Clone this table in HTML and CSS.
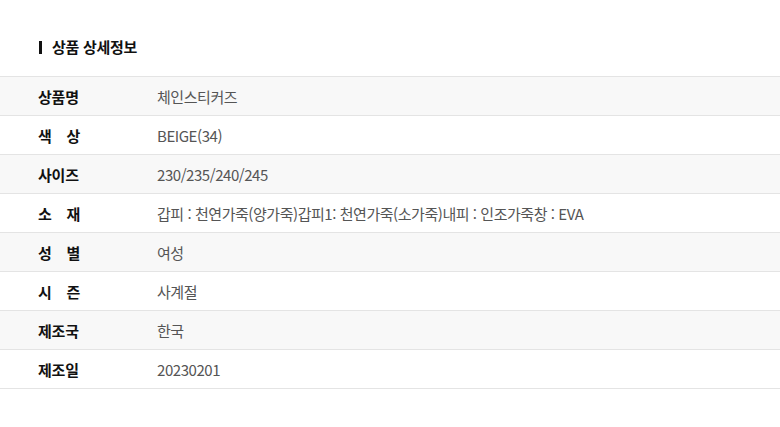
FILE: index.html
```html
<!DOCTYPE html>
<html lang="ko">
<head>
<meta charset="utf-8">
<link rel="stylesheet" href="styles.css">
</head>
<body>
<div class="page">
  <h2 class="title"><span class="bar"></span>상품 상세정보</h2>
  <div class="table">
    <div class="row alt"><div class="label">상품명</div><div class="value">체인스티커즈</div></div>
    <div class="row"><div class="label">색 상</div><div class="value">BEIGE(34)</div></div>
    <div class="row alt"><div class="label">사이즈</div><div class="value">230/235/240/245</div></div>
    <div class="row"><div class="label">소 재</div><div class="value">갑피 : 천연가죽(양가죽)갑피1: 천연가죽(소가죽)내피 : 인조가죽창 : EVA</div></div>
    <div class="row alt"><div class="label">성 별</div><div class="value">여성</div></div>
    <div class="row"><div class="label">시 즌</div><div class="value">사계절</div></div>
    <div class="row alt"><div class="label">제조국</div><div class="value">한국</div></div>
    <div class="row"><div class="label">제조일</div><div class="value">20230201</div></div>
  </div>
</div>
</body>
</html>
```
FILE: styles.css
```css
* { box-sizing: border-box; }
body {
  margin: 0;
  background: #fff;
  font-family: "Noto Sans CJK KR", "Noto Sans", sans-serif;
  color: #111;
}
.page { padding-top: 37px; }
.title {
  margin: 0 0 19px 0;
  padding-left: 39px;
  display: flex;
  align-items: center;
  font-size: 15px;
  font-weight: 700;
  line-height: 20px;
  letter-spacing: -0.3px;
}
.bar {
  width: 3px;
  height: 13px;
  background: #111;
  margin-right: 10px;
}
.table { border-top: 1px solid #e4e4e4; }
.row {
  display: flex;
  align-items: center;
  height: 39px;
  border-bottom: 1px solid #e4e4e4;
  font-size: 15px;
}
.row.alt { background: #f8f8f8; }
.label {
  width: 42px;
  margin-left: 38px;
  font-weight: 700;
  color: #111;
  text-align: justify;
  text-align-last: justify;
  white-space: nowrap;
  letter-spacing: -0.2px;
}
.value {
  margin-left: 77px;
  color: #555;
  letter-spacing: -0.45px;
}
```
